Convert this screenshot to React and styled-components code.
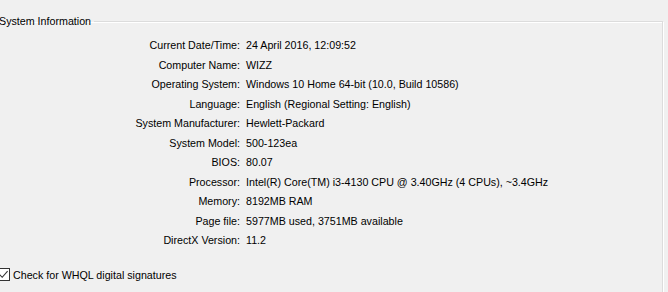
import React from 'react'
import styled, { createGlobalStyle } from 'styled-components'

const GlobalStyle = createGlobalStyle`
  html, body {
    margin: 0;
    background: #f0f0f0;
    overflow: hidden;
  }
  body {
    font-family: "Liberation Sans", Arial, sans-serif;
    font-size: 10.7px;
    color: #000;
  }
`

const info = [
    { label: 'Current Date/Time:', value: '24 April 2016, 12:09:52' },
    { label: 'Computer Name:', value: 'WIZZ' },
    { label: 'Operating System:', value: 'Windows 10 Home 64-bit (10.0, Build 10586)' },
    { label: 'Language:', value: 'English (Regional Setting: English)' },
    { label: 'System Manufacturer:', value: 'Hewlett-Packard' },
    { label: 'System Model:', value: '500-123ea' },
    { label: 'BIOS:', value: '80.07' },
    { label: 'Processor:', value: 'Intel(R) Core(TM) i3-4130 CPU @ 3.40GHz (4 CPUs), ~3.4GHz' },
    { label: 'Memory:', value: '8192MB RAM' },
    { label: 'Page file:', value: '5977MB used, 3751MB available' },
    { label: 'DirectX Version:', value: '11.2' }
]

const Page = styled.div`
  height: 292px;
  overflow: hidden;
`

const GroupBox = styled.fieldset`
  margin: 13px 5px 0 -10px;
  padding: 0 0 40px 0;
  border: 1px solid #dcdcdc;
  box-shadow: 1px 1px 0 #fff, inset 1px 1px 0 #fff;
  min-height: 320px;
`

const Title = styled.legend`
  margin-left: 5px;
  padding: 0 3px;
  line-height: 16px;
`

const InfoGrid = styled.div`
  display: grid;
  grid-template-columns: 249px 1fr;
  column-gap: 6px;
  padding-top: 7px;
`

const Label = styled.div`
  text-align: right;
  line-height: 19.5px;
  white-space: nowrap;
`

const Value = styled.div`
  line-height: 19.5px;
  white-space: nowrap;
`

const CheckRow = styled.label`
  display: flex;
  align-items: center;
  gap: 3px;
  margin: 16px 0 0 6px;
  line-height: 16px;
`

const Box = styled.span`
  width: 11px;
  height: 11px;
  border: 1px solid #333;
  background: #fff;
  display: flex;
  align-items: center;
  justify-content: center;
`

const App = () => {
    return (<>
        <GlobalStyle />
        <Page>
            <GroupBox>
                <Title>System Information</Title>
                <InfoGrid>
                    {info.map((row) => (
                        <React.Fragment key={ row.label }>
                            <Label>{row.label}</Label>
                            <Value>{row.value}</Value>
                        </React.Fragment>
                    ))}
                </InfoGrid>
                <CheckRow>
                    <Box>
                        <svg width="11" height="11" viewBox="0 0 11 11">
                            <path d="M1.5 5.5 L4.2 8.3 L9.6 2.2" fill="none" stroke="#333" strokeWidth="1.1" />
                        </svg>
                    </Box>
                    Check for WHQL digital signatures
                </CheckRow>
            </GroupBox>
        </Page>
    </>)
}

export default App
